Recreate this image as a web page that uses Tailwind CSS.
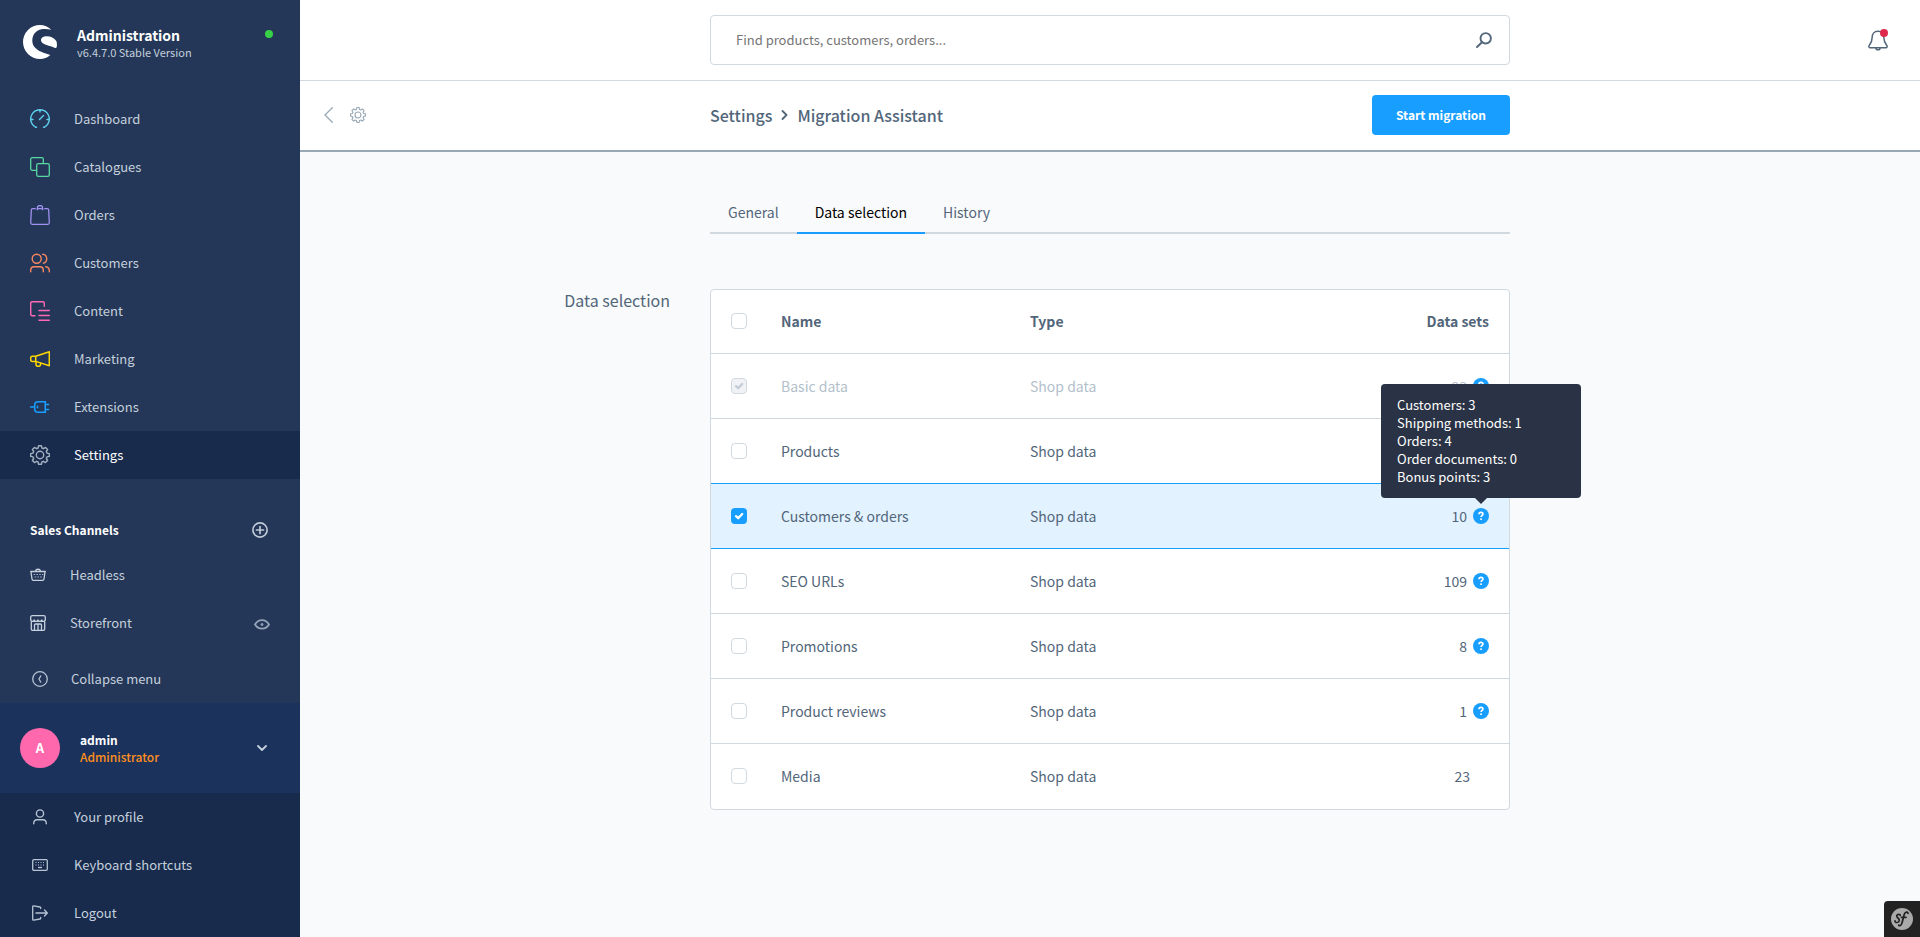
<!DOCTYPE html>
<html lang="en">
<head>
<meta charset="utf-8">
<meta name="viewport" content="width=device-width, initial-scale=1">
<title>Migration Assistant | Administration</title>
<script src="https://cdn.jsdelivr.net/npm/@tailwindcss/browser@4"></script>
</head>
<body class="flex min-h-screen bg-[#f9fafb] font-['Source_Sans_Pro','Noto_Sans_CJK_SC',sans-serif] text-[14px] leading-5 text-[#52667a]">

<svg class="hidden" aria-hidden="true">
  <symbol id="gear" viewBox="0 0 20 20"><g fill="none" stroke="currentColor" stroke-width="1.4" stroke-linejoin="round"><circle cx="10" cy="10" r="3.7"/><path d="M8.6 .7h2.8l.5 2.3 1.6.7 2-1.3 2.1 2.1-1.3 2 .7 1.6 2.3.5v2.8l-2.3.5-.7 1.6 1.3 2-2.1 2.1-2-1.3-1.6.7-.5 2.3H8.6l-.5-2.3-1.6-.7-2 1.3-2.1-2.1 1.3-2-.7-1.6-2.3-.5V8.6l2.3-.5.7-1.6-1.3-2 2.1-2.1 2 1.3L8.100 3z"/></g></symbol>
  <symbol id="check" viewBox="0 0 16 16"><path d="M5 8.200 7.200 10.200 11.200 6" fill="none" stroke="currentColor" stroke-width="2.300" stroke-linecap="round" stroke-linejoin="round"/></symbol>
  <symbol id="help" viewBox="0 0 16 16"><circle cx="8" cy="8" r="8" fill="#189eff"/><path d="M6 6.300c0-1.200.9-1.900 2-1.900s2 .7 2 1.700c0 1.300-1.900 1.400-1.900 3" fill="none" stroke="#fff" stroke-width="1.600"/><rect x="7.200" y="10.300" width="1.700" height="1.700" rx=".5" fill="#fff"/></symbol>
</svg>

<aside class="flex w-[300px] shrink-0 flex-col bg-[#243758] text-[13px] text-[#c4d0dc]">
  <header class="flex h-[95px] items-start pt-[25px] pr-[27px] pl-[23px]">
    <svg class="size-[34px]" viewBox="0 0 34 34" fill="#fff" aria-hidden="true"><path d="M28.300 4.800C25.300 1.700 21.200 0 17 0a17 17 0 0 0 0 34c4 0 7.500-1.500 10.300-4C20 27.500 9.300 25 9.300 15.500 9.300 9 14 4.300 20.500 4c3-.1 5.500.2 7.800.8z"/><path d="M18 15.500c-.3-2.500 2.600-4.200 5.700-4.200 4 0 7.700 2 9.600 4.700.8 1.700.8 4.700.4 6-.2.800-.8 1.100-1.700.9-3-1.300-5.600-1.900-8.300-2.900-3-1.100-5.500-2.300-5.700-4.500z"/></svg>
    <div class="ml-5 grow">
      <p class="text-[14px] leading-5 font-bold text-white">Administration</p>
      <p class="text-[11px] leading-[14px]">v6.4.7.0 Stable Version</p>
    </div>
    <span class="mt-[5px] size-2 rounded-full bg-[#37d046]"></span>
  </header>

  <nav aria-label="Main">
    <a href="#" class="flex h-12 items-center gap-6 pl-[30px]">
      <svg class="size-5 text-[#5fd0ee]" viewBox="0 0 20 20" fill="none" stroke="currentColor" stroke-width="1.400" stroke-linecap="round"><path d="M6.500 18.300H5.800A9.300 9.300 0 1 1 14.200 18.300H13.500M10 1v2M1 10.500h2M17 10.500h2M9.500 10.500l4-4"/></svg>Dashboard</a>
    <a href="#" class="flex h-12 items-center gap-6 pl-[30px]">
      <svg class="size-5 text-[#57d9a3]" viewBox="0 0 20 20" fill="none" stroke="currentColor" stroke-width="1.300"><rect x="6.700" y="6.700" width="12.600" height="12.600" rx="1.600"/><path d="M6.700 13.300H2.200A1.500 1.500 0 0 1 .7 11.800V2.200A1.500 1.500 0 0 1 2.200.7h9.600a1.500 1.500 0 0 1 1.500 1.500v4.500"/></svg>Catalogues</a>
    <a href="#" class="flex h-12 items-center gap-6 pl-[30px]">
      <svg class="size-5 text-[#a092f0]" viewBox="0 0 20 20" fill="none" stroke="currentColor" stroke-width="1.300" stroke-linecap="round"><path d="M5.200 3.700H2.700Q1.400 3.700 1.300 5L.7 17.800q0 1.500 1.400 1.500h15.800q1.400 0 1.400-1.500L18.700 5q-.1-1.300-1.400-1.300h-2.500M7.300 4.700V3.200a2.600 2.600 0 0 1 5.400 0v1.500M7.300 3.700h5.400"/></svg>Orders</a>
    <a href="#" class="flex h-12 items-center gap-6 pl-[30px]">
      <svg class="size-5 text-[#f88962]" viewBox="0 0 20 20" fill="none" stroke="currentColor" stroke-width="1.400" stroke-linecap="round"><circle cx="6.700" cy="5.700" r="4.500"/><path d="M.7 18.700v-1.500q0-3.500 3.500-3.500h5.600q3.500 0 3.500 3.500v1.500M12.700 1.200c2.300 0 4 2 4 4.500s-1.500 4-3.200 4.500M15.700 13.700q3.600.5 3.600 3.700v1.300"/></svg>Customers</a>
    <a href="#" class="flex h-12 items-center gap-6 pl-[30px]">
      <svg class="size-5 text-[#ff68b4]" viewBox="0 0 20 20" fill="none" stroke="currentColor" stroke-width="1.400" stroke-linecap="round"><path d="M5 14.700H2.200q-1.500 0-1.500-1.500V2.200Q.7.700 2.200.7h10.600q1.500 0 1.500 1.500V5.300M9 9.500h10.300M9 14.500h10.300M9 19.300h10.300"/></svg>Content</a>
    <a href="#" class="flex h-12 items-center gap-6 pl-[30px]">
      <svg class="size-5 text-[#ffd700]" viewBox="0 0 20 20" fill="none" stroke="currentColor" stroke-width="1.500" stroke-linejoin="round"><path d="M5.700 7.300 19.300 2.700v14L5.700 12.400zM5.700 7.300H2.200Q.7 7.300.7 8.800v2.100q0 1.500 1.500 1.500h3.500M6 12.500v2.700c0 2.800 4.500 2.800 4.500.5v-1.500"/></svg>Marketing</a>
    <a href="#" class="flex h-12 items-center gap-6 pl-[30px]">
      <svg class="size-5 text-[#189eff]" viewBox="0 0 20 20" fill="none" stroke="currentColor" stroke-width="1.600" stroke-linecap="round"><path d="M15.300 4.700H8q-3.300 0-3.300 3.300v4q0 3.300 3.300 3.300h7.300zM.7 10h4M15.500 7.500h3M15.500 12.500h3M7.500 9.300v1.400"/></svg>Extensions</a>
    <a href="#" aria-current="page" class="flex h-12 items-center gap-6 bg-[#182b4d] pl-[30px] text-white">
      <svg class="size-5 text-[#a3b0c0]"><use href="#gear"/></svg>Settings</a>
  </nav>

  <section class="pt-7">
    <div class="flex h-[46px] items-center justify-between pr-8 pl-[30px]">
      <h2 class="text-[12px] font-bold text-white">Sales Channels</h2>
      <button type="button" aria-label="Add sales channel"><svg class="size-4" viewBox="0 0 16 16" fill="none" stroke="#c0cad8" stroke-width="1.700" stroke-linecap="round"><circle cx="8" cy="8" r="7.100"/><path d="M8 4.500v7M4.500 8h7"/></svg></button>
    </div>
    <a href="#" class="flex h-11 items-center gap-6 pl-[30px]">
      <svg class="size-4" viewBox="0 0 16 16" fill="none" stroke="#c8d2de" stroke-linecap="round"><path stroke-width="1.300" d="M.7 4.500h14.600M1 5l1 7q.2 1.300 1.300 1.300h9.400q1.100 0 1.300-1.300l1-7M5.500 4.200c.5-2.600 4.500-2.600 5 0"/><path stroke-width=".8" stroke-dasharray=".8 2" d="M4 7.500h9M5 10h7"/></svg>Headless</a>
    <div class="flex h-[52px] items-center justify-between pr-[30px] pl-[30px]">
      <a href="#" class="flex items-center gap-6">
        <svg class="size-4" viewBox="0 0 16 16" fill="none" stroke="#c8d2de" stroke-width="1.300"><path d="M1.300 7v7q0 1.300 1.300 1.300h10.800q1.300 0 1.300-1.300V7M.7 4.500V2.300Q.7.700 2.300.7h11.400q1.600 0 1.600 1.600v2.200M.7 4.500c0 2.600 3.600 2.600 3.600 0 0 2.600 3.700 2.600 3.700 0 0 2.600 3.700 2.600 3.700 0 0 2.600 3.600 2.600 3.600 0M4.500 15V10q0-1 1-1h5q1 0 1 1v5M8 9v6"/></svg>Storefront</a>
      <button type="button" aria-label="Open storefront"><svg class="size-4" viewBox="0 0 16 16" fill="none" stroke="#95a5b8" stroke-width="1.700"><path d="M1 9.500C4.300 3.700 11.700 3.700 15 9.500 11.700 15 4.300 15 1 9.500z"/><circle cx="8" cy="9.500" r="1" fill="#95a5b8" stroke-width="1"/></svg></button>
    </div>
  </section>

  <button type="button" class="mt-[6px] flex h-12 items-center gap-[23px] pl-8 text-left">
    <svg class="size-4" viewBox="0 0 16 16" fill="none" stroke="#b6c4d4" stroke-width="1.300"><circle cx="8" cy="8" r="7.300"/><path d="M9 4.500 7 8l2 3.500"/></svg>Collapse menu</button>

  <button type="button" class="flex h-[90px] items-center bg-[#1b325c] px-5 text-left" aria-expanded="true">
    <span class="grid size-10 place-items-center rounded-full bg-[#ff68ac] font-bold text-white">A</span>
    <span class="ml-5 grow text-[12px] leading-[17px] font-bold">
      <span class="block text-white">admin</span>
      <span class="block font-medium text-[#ff8f1c]">Administrator</span>
    </span>
    <svg class="mr-[13px] h-[6px] w-[10px]" viewBox="0 0 10 6" fill="none" stroke="#c4d0dc" stroke-width="1.800" stroke-linecap="round" stroke-linejoin="round"><path d="M1 1l4 4 4-4"/></svg>
  </button>

  <nav aria-label="User" class="grow bg-[#182b4d]">
    <a href="#" class="flex h-12 items-center gap-[26px] pl-8">
      <svg class="size-4" viewBox="0 0 16 16" fill="none" stroke="#b6c4d4" stroke-width="1.400" stroke-linecap="round"><circle cx="8" cy="4.500" r="3.600"/><path d="M1.700 14.700q0-4 3.300-4h6q3.300 0 3.300 4"/></svg>Your profile</a>
    <a href="#" class="flex h-12 items-center gap-[26px] pl-8">
      <svg class="size-4" viewBox="0 0 16 16" fill="none" stroke="#b6c4d4" stroke-width="1.300"><rect x=".7" y="2.700" width="14.600" height="10.600" rx="1.200"/><path d="M6 10.500h4"/><path stroke-dasharray="1 1.500" stroke-width="1" d="M3.500 5.500h10M3.500 8h10"/></svg>Keyboard shortcuts</a>
    <a href="#" class="flex h-12 items-center gap-[26px] pl-8">
      <svg class="size-4" viewBox="0 0 16 16" fill="none" stroke="#b6c4d4" stroke-width="1.300" stroke-linecap="round" stroke-linejoin="round"><path d="M8.700 3.500V2.800q0-.7-.7-.8L1.700.8Q.7.700.7 1.700v12.600q0 1 1 .9L8 14q.7-.1.700-.8v-.7M4 8h11.200M12.500 5l2.800 3-2.800 3"/></svg>Logout</a>
  </nav>
</aside>

<div class="flex min-w-0 grow flex-col">
  <header class="grid grid-cols-[1fr_minmax(0,800px)_1fr] items-center border-b border-[#d1d9e0] bg-white py-[15px]">
    <form role="search" class="col-start-2 flex h-[50px] items-center rounded border border-[#d1d9e0] pr-[17px] pl-[25px]">
      <input type="search" aria-label="Search" placeholder="Find products, customers, orders..." class="min-w-0 grow text-[13px] outline-none placeholder:text-[#757575]">
      <button type="submit" aria-label="Search"><svg class="size-4" viewBox="0 0 16 16" fill="none" stroke="#52667a" stroke-width="1.900" stroke-linecap="round"><circle cx="9.700" cy="6.300" r="5.200"/><path d="M6 10.200 1 15"/></svg></button>
    </form>
    <button type="button" aria-label="Notifications" class="mr-8 justify-self-end">
      <svg class="h-[22px] w-5" viewBox="0 0 20 22" fill="none" stroke="#52667a" stroke-width="1.500"><path d="M10 2.200c-3.700 0-5.800 2.600-5.800 6 0 4.500-1 5.800-3 8.300-.7 1-.3 2.200 1 2.200h15.600c1.300 0 1.700-1.200 1-2.200-2-2.500-3-3.800-3-8.300 0-3.400-2.100-6-5.800-6zM8 18.900c0 2.600 4 2.600 4 0"/><circle cx="16" cy="4" r="4" fill="#de294c" stroke="none"/></svg>
    </button>
  </header>

  <div class="grid h-[71px] grid-cols-[1fr_minmax(0,800px)_1fr] items-center border-b-2 border-[#98a8b5] bg-white pb-[1px]">
    <div class="flex items-center gap-[17px] pl-6 text-[#98a8b5]">
      <a href="#" aria-label="Back"><svg class="h-4 w-[9px]" viewBox="0 0 9 16" fill="none" stroke="currentColor" stroke-width="1.300" stroke-linecap="round"><path d="M8.300.7 1 8l7.300 7.300"/></svg></a>
      <svg class="size-4"><use href="#gear"/></svg>
    </div>
    <div class="flex items-center justify-between">
      <h1 class="flex items-center gap-[9px] text-[16px] leading-6 font-medium">
        <a href="#">Settings</a>
        <svg class="h-[10px] w-[7px]" viewBox="0 0 7 10" fill="none" stroke="currentColor" stroke-width="1.800" stroke-linecap="round" stroke-linejoin="round"><path d="M1.500 1 5.500 5l-4 4"/></svg>
        <span>Migration Assistant</span>
      </h1>
      <button type="button" class="h-10 rounded bg-[#189eff] px-6 text-[12px] font-bold text-white">Start migration</button>
    </div>
  </div>

  <main class="grid grid-cols-[1fr_minmax(0,800px)_1fr] pt-10">
    <div role="tablist" class="col-start-2 flex h-[42px] items-stretch border-b-2 border-[#d1d9e0]">
      <button type="button" role="tab" class="px-[18px]">General</button>
      <button type="button" role="tab" aria-selected="true" class="-mb-[2px] border-b-2 border-[#189eff] px-[18px] text-black">Data selection</button>
      <button type="button" role="tab" class="px-[18px]">History</button>
    </div>

    <h2 class="col-start-1 mt-[54px] pr-10 text-right text-[16px] leading-6">Data selection</h2>
    <div class="mt-[55px] rounded border border-[#d1d9e0] bg-white">
      <table class="w-full table-fixed border-collapse text-left">
        <colgroup><col class="w-[70px]"><col class="w-[249px]"><col><col class="w-[180px]"></colgroup>
        <thead>
          <tr class="h-[63px] border-b border-[#d1d9e0]">
            <th class="pl-5"><input type="checkbox" aria-label="Select all" class="block size-4 appearance-none rounded border border-[#d1d9e0] bg-white"></th>
            <th class="font-bold">Name</th><th class="font-bold">Type</th><th class="pr-5 text-right font-bold">Data sets</th>
          </tr>
        </thead>
        <tbody>
          <tr class="h-[65px] border-b border-[#d1d9e0] text-[#b3bfcb]">
            <td class="pl-5"><span class="grid size-4"><input id="basic" type="checkbox" checked disabled class="col-start-1 row-start-1 size-4 appearance-none rounded border border-[#d1d9e0] bg-[#f0f2f5]"><svg class="pointer-events-none col-start-1 row-start-1 size-4 text-[#c2ccd6]"><use href="#check"/></svg></span></td>
            <td><label for="basic">Basic data</label></td><td>Shop data</td>
            <td class="pr-5"><span class="flex items-center justify-end gap-[6px]">23<svg class="size-4"><use href="#help"/></svg></span></td>
          </tr>
          <tr class="h-[65px] border-b border-[#189eff]">
            <td class="pl-5"><input id="products" type="checkbox" class="block size-4 appearance-none rounded border border-[#d1d9e0] bg-white"></td>
            <td><label for="products">Products</label></td><td>Shop data</td>
            <td class="pr-5"><span class="flex items-center justify-end"><svg class="size-4"><use href="#help"/></svg></span></td>
          </tr>
          <tr class="h-[65px] border-b border-[#189eff] bg-[#e2f2ff]">
            <td class="pl-5"><span class="grid size-4"><input id="customers" type="checkbox" checked class="col-start-1 row-start-1 size-4 appearance-none rounded bg-[#189eff]"><svg class="pointer-events-none col-start-1 row-start-1 size-4 text-white"><use href="#check"/></svg></span></td>
            <td><label for="customers">Customers &amp; orders</label></td><td>Shop data</td>
            <td class="pr-5"><span class="flex items-center justify-end gap-[6px]">10
              <span class="relative size-4" aria-describedby="tip"><svg class="size-4"><use href="#help"/></svg>
                <span id="tip" role="tooltip" class="absolute bottom-[26px] left-1/2 z-10 w-[200px] -translate-x-1/2 rounded bg-[#2a3345] px-4 py-3 text-[13px] leading-[18px] text-white">Customers: 3<br>Shipping methods: 1<br>Orders: 4<br>Order documents: 0<br>Bonus points: 3
                  <svg class="absolute top-full left-1/2 h-[6px] w-3 -translate-x-1/2" viewBox="0 0 12 6" fill="#2a3345"><path d="M0 0h12L6 6z"/></svg>
                </span>
              </span></span></td>
          </tr>
          <tr class="h-[65px] border-b border-[#d1d9e0]">
            <td class="pl-5"><input id="seo" type="checkbox" class="block size-4 appearance-none rounded border border-[#d1d9e0] bg-white"></td>
            <td><label for="seo">SEO URLs</label></td><td>Shop data</td>
            <td class="pr-5"><span class="flex items-center justify-end gap-[6px]">109<svg class="size-4"><use href="#help"/></svg></span></td>
          </tr>
          <tr class="h-[65px] border-b border-[#d1d9e0]">
            <td class="pl-5"><input id="promotions" type="checkbox" class="block size-4 appearance-none rounded border border-[#d1d9e0] bg-white"></td>
            <td><label for="promotions">Promotions</label></td><td>Shop data</td>
            <td class="pr-5"><span class="flex items-center justify-end gap-[6px]">8<svg class="size-4"><use href="#help"/></svg></span></td>
          </tr>
          <tr class="h-[65px] border-b border-[#d1d9e0]">
            <td class="pl-5"><input id="reviews" type="checkbox" class="block size-4 appearance-none rounded border border-[#d1d9e0] bg-white"></td>
            <td><label for="reviews">Product reviews</label></td><td>Shop data</td>
            <td class="pr-5"><span class="flex items-center justify-end gap-[6px]">1<svg class="size-4"><use href="#help"/></svg></span></td>
          </tr>
          <tr class="h-[66px]">
            <td class="pl-5"><input id="media" type="checkbox" class="block size-4 appearance-none rounded border border-[#d1d9e0] bg-white"></td>
            <td><label for="media">Media</label></td><td>Shop data</td>
            <td class="pr-[39px] text-right">23</td>
          </tr>
        </tbody>
      </table>
    </div>
  </main>
</div>

<button type="button" aria-label="Symfony profiler" class="fixed right-0 bottom-0 grid size-9 place-items-center rounded-tl bg-[#222]">
  <svg class="size-6" viewBox="0 0 24 24" fill="none" aria-hidden="true"><circle cx="12" cy="12" r="11" fill="#aaa"/><g stroke="#222" stroke-width="1.700" stroke-linecap="round"><path d="M10.200 8.500c.3-1.500-3-1.700-3.500.3-.5 2.200 3 2.200 2.600 4.700-.3 2.500-4.600 2.700-4.300.4"/><path d="M18 6.300c-.2-1.800-2.800-1.800-3.800 1.200-1 3-1.400 6.500-2.500 9.300-.8 2.200-2.700 2.400-3 1.200M11.500 10.300h4.500"/></g></svg>
</button>
</body>
</html>
